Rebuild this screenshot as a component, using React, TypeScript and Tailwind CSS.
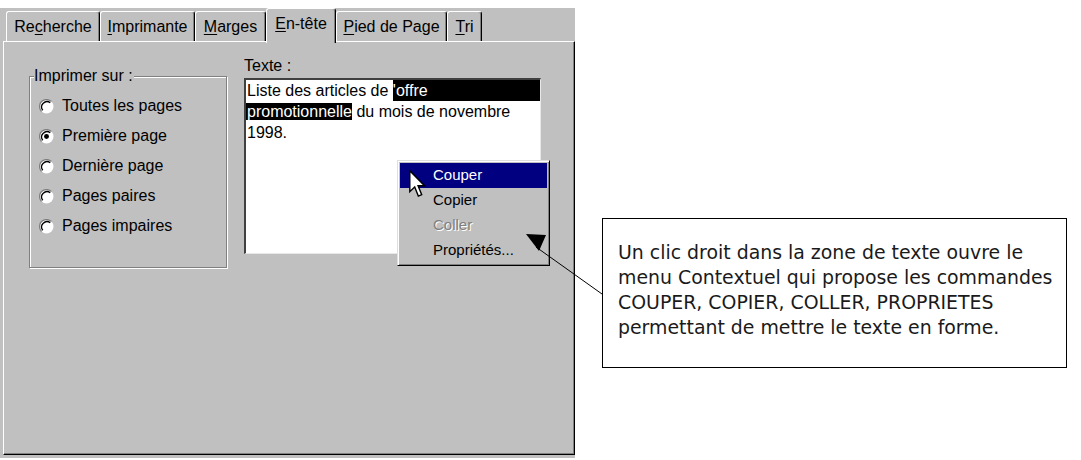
import React from 'react';

const dlgFont = { fontFamily: '"Liberation Sans", Arial, sans-serif' };

const tabs = [
  { pre: 'Re', key: 'c', post: 'herche', w: 'w-[94px]' },
  { pre: '', key: 'I', post: 'mprimante', w: 'w-[95px]' },
  { pre: '', key: 'M', post: 'arges', w: 'w-[71px]' },
  { pre: '', key: 'E', post: 'n-tête', w: 'w-[70px]', active: true },
  { pre: '', key: 'P', post: 'ied de Page', w: 'w-[111px]' },
  { pre: '', key: 'T', post: 'ri', w: 'w-[35px]' },
];

const options = ['Toutes les pages', 'Première page', 'Dernière page', 'Pages paires', 'Pages impaires'];

const Radio = ({ checked }: { checked?: boolean }) => (
  <svg width="15" height="15" viewBox="0 0 14 14" className="shrink-0">
    <circle cx="7" cy="7" r="6.5" fill="#ffffff" />
    <path d="M11.6 2.4 A6.5 6.5 0 0 0 2.4 11.6" fill="none" stroke="#808080" strokeWidth="1.2" />
    <path d="M10.5 3.5 A5 5 0 0 0 3.5 10.5" fill="none" stroke="#000000" strokeWidth="1.2" />
    {checked && <circle cx="7" cy="7" r="2.3" fill="#000000" />}
  </svg>
);

const Tab = ({ t }: { t: (typeof tabs)[number] }) => (
  <div
    className={`${t.w} ${
      t.active ? 'relative z-10 h-[35px] -mb-[2px]' : 'h-[30px]'
    } flex items-start justify-center pt-[5px] bg-[#c0c0c0] border-t border-l border-white border-r border-r-black rounded-t-[3px] shadow-[inset_-1px_0_0_#808080] text-[16px] leading-[20px] text-black`}
  >
    <span>
      {t.pre}
      <u className="underline-offset-2">{t.key}</u>
      {t.post}
    </span>
  </div>
);

export default function App() {
  return (
    <div className="relative w-[1081px] h-[460px] bg-white flex overflow-hidden">
      {/* dialog */}
      <div className="mt-[8px] w-[575px] h-[450px] bg-[#c0c0c0] flex flex-col" style={dlgFont}>
        <div className="h-[33px] flex items-end pl-[6px]">
          {tabs.map((t) => (
            <Tab key={t.post} t={t} />
          ))}
        </div>
        <div className="ml-[3px] h-[414px] border-t border-l border-white border-r border-b border-r-black border-b-black shadow-[inset_-1px_-1px_0_#808080] flex items-start pt-[15px] pl-[25px]">
          {/* group box */}
          <div className="relative mt-[19px] w-[198px] h-[192px] border border-[#808080] shadow-[inset_1px_1px_0_#ffffff,1px_1px_0_#ffffff] pt-[14px] pl-[9px]">
            <span className="absolute -top-[11px] left-[4px] bg-[#c0c0c0] text-[16px] leading-[20px] text-black pr-[1px]">
              Imprimer sur :
            </span>
            {options.map((o, i) => (
              <div key={o} className="h-[30px] flex items-center gap-[8px] text-[16px] text-black">
                <Radio checked={i === 1} />
                <span>{o}</span>
              </div>
            ))}
          </div>
          {/* text field */}
          <div className="ml-[17px] flex flex-col">
            <div className="h-[21px] text-[16px] leading-[18px] text-black">Texte :</div>
            <div className="w-[297px] h-[176px] bg-white border-t-2 border-l-2 border-t-[#404040] border-l-[#404040] border-r border-b border-r-[#e8e8e8] border-b-[#e8e8e8] text-[16px] leading-[21px] text-black">
              <div className="flex whitespace-pre pl-[1px]">
                <span>Liste des articles de </span>
                <span className="flex-1 bg-black text-white">'offre</span>
              </div>
              <div className="whitespace-pre">
                <span className="bg-black text-white pl-[1px]">promotionnelle</span>
                <span> du mois de novembre</span>
              </div>
              <div className="pl-[1px]">1998.</div>
            </div>
          </div>
        </div>
      </div>

      {/* callout */}
      <div
        className="ml-[27px] mt-[218px] w-[465px] h-[150px] border-[1.5px] border-black pl-[15px] pt-[21px] text-[18.9px] leading-[25px] text-[#1a1a1a]"
        style={{ fontFamily: '"DejaVu Sans", Verdana, sans-serif' }}
      >
        <div>Un clic droit dans la zone de texte ouvre le</div>
        <div>menu Contextuel qui propose les commandes</div>
        <div>COUPER, COPIER, COLLER, PROPRIETES</div>
        <div>permettant de mettre le texte en forme.</div>
      </div>

      {/* context menu */}
      <div
        className="absolute left-[397px] top-[160px] w-[153px] bg-[#c0c0c0] border-t border-l border-[#dfdfdf] border-r border-b border-r-black border-b-black shadow-[inset_1px_1px_0_#ffffff,inset_-1px_-1px_0_#808080] p-[2px] text-[15px]"
        style={dlgFont}
      >
        <div className="h-[25px] flex items-center pl-[33px] bg-[#000080] text-white">Couper</div>
        <div className="h-[25px] flex items-center pl-[33px] text-black">Copier</div>
        <div className="h-[25px] flex items-center pl-[33px] text-[#808080] [text-shadow:1px_1px_0_#ffffff]">Coller</div>
        <div className="h-[25px] flex items-center pl-[33px] text-black">Propriétés...</div>
      </div>

      {/* mouse cursor */}
      <svg className="absolute left-[409px] top-[170px]" width="17" height="28" viewBox="0 0 12 20">
        <path
          d="M0.5 0.5 L0.5 15.5 L4 12.2 L6.6 18.6 L9 17.6 L6.4 11.3 L11 11.3 Z"
          fill="#ffffff"
          stroke="#000000"
          strokeWidth="1"
          strokeLinejoin="miter"
        />
      </svg>

      {/* pointer line and arrow head */}
      <svg className="absolute left-0 top-0 pointer-events-none" width="1081" height="460">
        <line x1="536" y1="247" x2="602" y2="294" stroke="#000000" strokeWidth="1" />
        <polygon points="526,234 546,235 539,251" fill="#000000" />
      </svg>
    </div>
  );
}
